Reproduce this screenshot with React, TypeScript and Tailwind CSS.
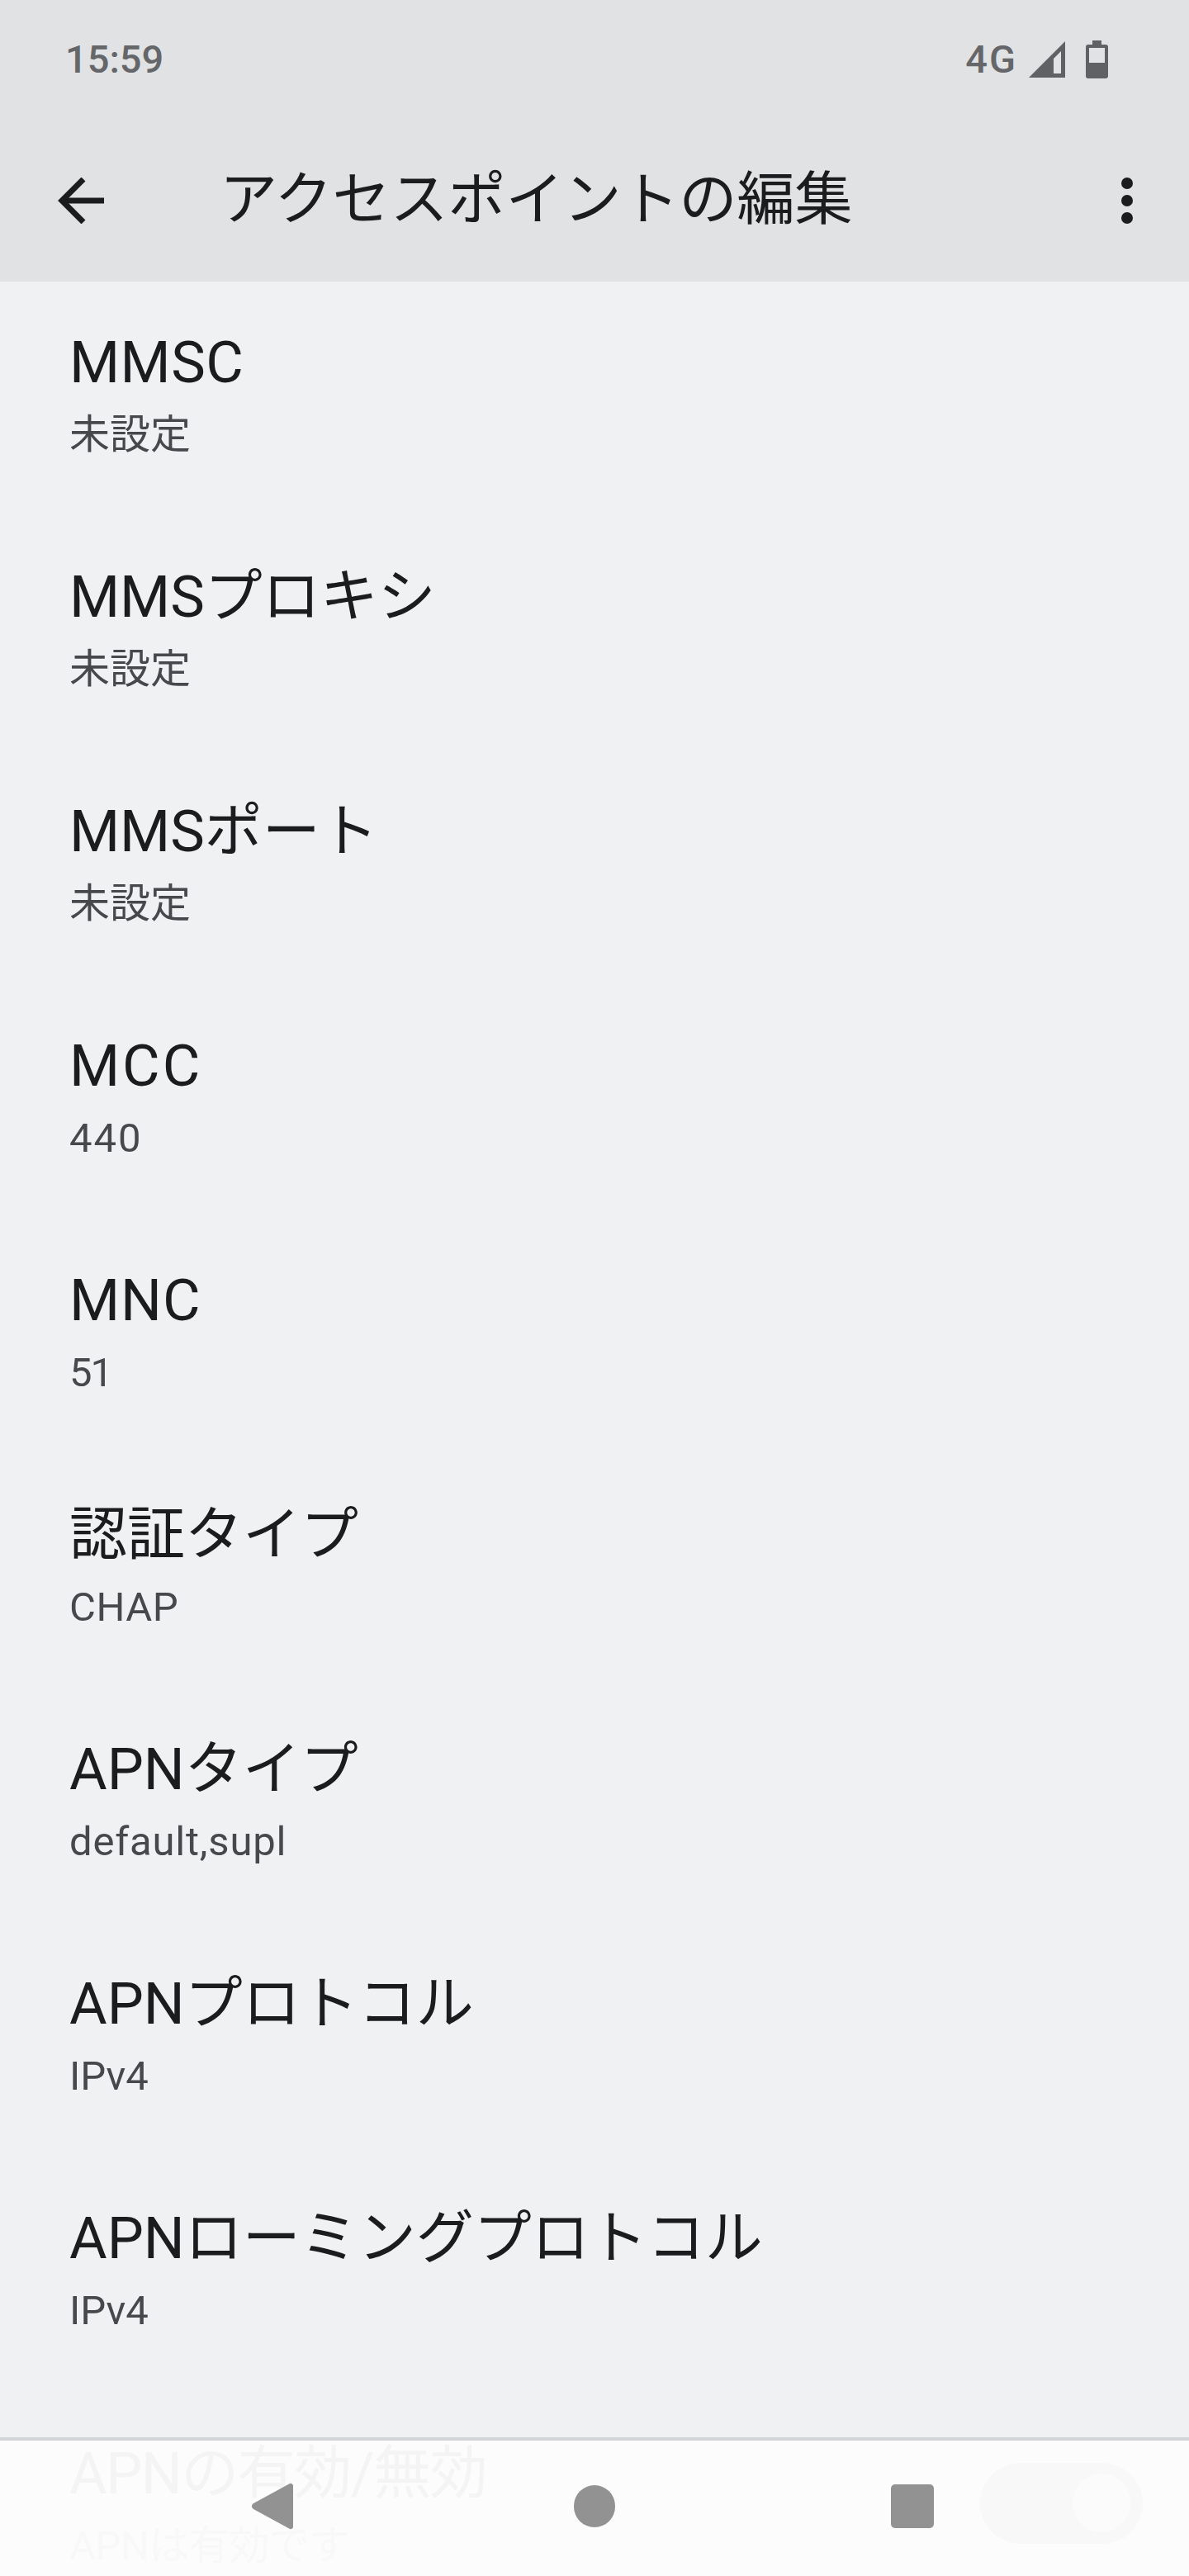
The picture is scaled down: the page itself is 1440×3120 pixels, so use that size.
const sans = "font-['Roboto','Noto_Sans_CJK_JP',sans-serif]";

// tracking is per row: the phone's Latin face is wider or narrower than Roboto depending on the glyphs
const rows = [
  { title: "MMSC", value: "未設定", titleClass: "tracking-[0.5px]" },
  { title: "MMSプロキシ", value: "未設定" },
  { title: "MMSポート", value: "未設定" },
  { title: "MCC", value: "440", titleClass: "tracking-[3px]", valueClass: "tracking-[2px]" },
  { title: "MNC", value: "51", titleClass: "tracking-[1px]", valueClass: "tracking-[-2px]" },
  { title: "認証タイプ", value: "CHAP", valueClass: "tracking-[0.5px]" },
  { title: "APNタイプ", value: "default,supl", valueClass: "tracking-[0.8px]" },
  { title: "APNプロトコル", value: "IPv4" },
  { title: "APNローミングプロトコル", value: "IPv4" },
];

function Row({ title, value, titleClass = "", valueClass = "" }: { title: string; value: string; titleClass?: string; valueClass?: string }) {
  return (
    <div className="h-[284px] pl-[84px] pt-[60px]">
      <div className={`h-[76px] text-[70px] leading-[76px] text-[#1a1c1e] ${titleClass}`}>{title}</div>
      <div className={`mt-[22px] h-[56px] text-[49px] leading-[56px] text-[#45494c] ${valueClass}`}>{value}</div>
    </div>
  );
}

function StatusBar() {
  return (
    <div className="flex h-[144px] items-start justify-between pl-[79px] pr-[98px] pt-[44px] text-[#646669]">
      <div className="text-[47px] font-medium leading-[56px]">15:59</div>
      <div className="flex items-center">
        <span className="text-[47px] font-medium leading-[56px] tracking-[2px]">4G</span>
        <svg className="ml-[14px]" width="44" height="44" viewBox="0 0 44 44" fill="none">
          <path d="M0 44 44 0V44Z" fill="#5f6165" />
          <path d="M30 21 39 12V39H30Z" fill="#e1e2e4" />
        </svg>
        <svg className="ml-[25px]" width="27" height="46" viewBox="0 0 27 46">
          <path d="M8 0h11v5h5a3 3 0 0 1 3 3v35a3 3 0 0 1-3 3H3a3 3 0 0 1-3-3V8a3 3 0 0 1 3-3h5Z" fill="#5f6165" />
          <rect x="4" y="9" width="19" height="18" fill="#e1e2e4" />
        </svg>
      </div>
    </div>
  );
}

function Toolbar() {
  return (
    <div className="flex h-[197px] items-start pl-[70px] pr-[68px] pt-[56px]">
      <svg className="mt-[15px]" width="56" height="56" viewBox="0 0 56 56" fill="none" stroke="#1a1c1e" strokeWidth="7">
        <path d="M56 28H4" />
        <path d="M31 2 5 28l26 26" />
      </svg>
      <div className="ml-[140px] text-[70px] leading-[84px] text-[#1a1c1e]">アクセスポイントの編集</div>
      <div className="ml-auto mt-[15px] flex flex-col gap-[7px]">
        <span className="h-[14px] w-[14px] rounded-full bg-[#1a1c1e]" />
        <span className="h-[14px] w-[14px] rounded-full bg-[#1a1c1e]" />
        <span className="h-[14px] w-[14px] rounded-full bg-[#1a1c1e]" />
      </div>
    </div>
  );
}

function NavBar() {
  return (
    <div className="relative flex h-[168px] items-center border-t-4 border-[#d3d4d5] bg-[#fcfcfc]">
      <div className="absolute left-[84px] top-[2px] text-[70px] leading-[76px] tracking-[-1.5px] text-[#f4f4f4]">APNの有効/無効</div>
      <div className="absolute left-[84px] top-[100px] text-[49px] leading-[56px] tracking-[-0.5px] text-[#f8f8f8]">APNは有効です</div>
      <svg className="absolute left-[305px] top-[51px]" width="50" height="57" viewBox="0 0 50 57">
        <path d="M46 1 2 25a4 4 0 0 0 0 7l44 24a3 3 0 0 0 4-3V4a3 3 0 0 0-4-3Z" fill="#929292" />
      </svg>
      <div className="absolute left-[695px] top-[54px] h-[51px] w-[50px] rounded-full bg-[#929292]" />
      <div className="absolute left-[1079px] top-[53px] h-[53px] w-[52px] rounded-[5px] bg-[#929292]" />
      <div className="absolute left-[1187px] top-[27px] h-[98px] w-[197px] rounded-full bg-[#f8f8f8]">
        <div className="absolute left-[112px] top-[13px] h-[71px] w-[70px] rounded-full bg-[#fbfbfb]" />
      </div>
    </div>
  );
}

export default function App() {
  return (
    <div className={`flex h-[3120px] w-[1440px] flex-col overflow-hidden bg-[#f0f1f3] ${sans}`}>
      <div className="h-[341px] shrink-0 bg-[#e1e2e4]">
        <StatusBar />
        <Toolbar />
      </div>
      <div className="min-h-0 flex-1 overflow-hidden">
        {rows.map((r) => (
          <Row key={r.title} title={r.title} value={r.value} titleClass={r.titleClass} valueClass={r.valueClass} />
        ))}
      </div>
      <NavBar />
    </div>
  );
}
